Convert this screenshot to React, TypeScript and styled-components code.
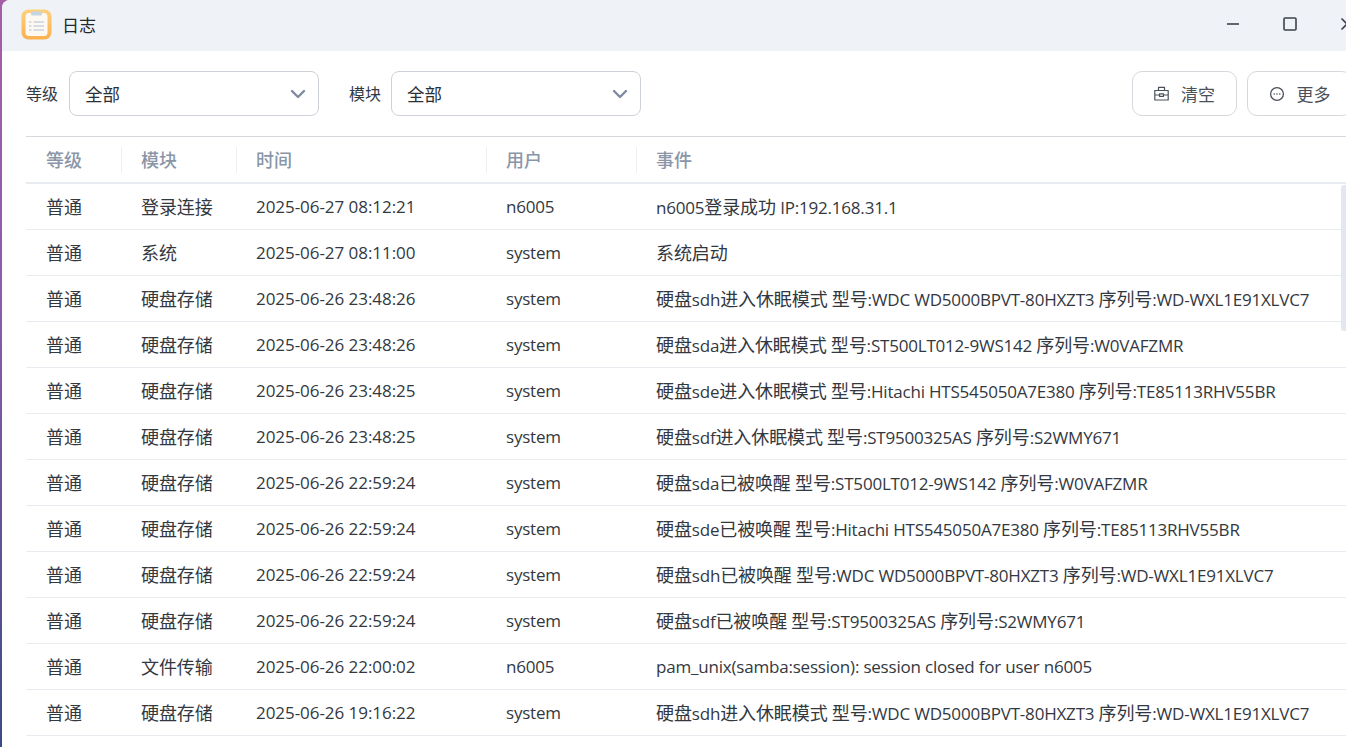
import React from "react";
import styled, { createGlobalStyle } from "styled-components";

const Global = createGlobalStyle`
  html, body { margin: 0; padding: 0; height: 100%; background: #fff; overflow: hidden; }
  #root { height: 100%; }
  * { box-sizing: border-box; }
`;

const Desktop = styled.div`
  width: 1346px;
  height: 747px;
  overflow: hidden;
  display: flex;
  background: linear-gradient(180deg, #a45fa6 0%, #8d5ca8 40%, #3d4a86 100%);
  font-family: "Open Sans", "Noto Sans CJK SC", "Noto Sans", sans-serif;
`;

const Win = styled.div`
  margin-left: 2px;
  width: 1374px;
  flex: none;
  height: 747px;
  background: #fff;
  border-top-left-radius: 8px;
  display: flex;
  flex-direction: column;
  overflow: hidden;
`;

const TitleBar = styled.div`
  height: 51px;
  flex: none;
  background: #eff3f8;
  display: flex;
  align-items: center;
  padding: 0 0 3px 19px;
`;

const Title = styled.div`
  margin-left: 10px;
  font-size: 17px;
  color: #23272e;
  width: 1142px;
  flex: none;
`;

const WinBtn = styled.div`
  width: 57px;
  height: 48px;
  flex: none;
  display: flex;
  align-items: center;
  justify-content: center;
`;

const Toolbar = styled.div`
  height: 85px;
  flex: none;
  display: flex;
  align-items: flex-start;
  padding: 20px 0 0 24px;
`;

const FieldLabel = styled.span<{ $gap: number }>`
  font-size: 16px;
  line-height: 46px;
  color: #333a44;
  margin-right: ${(p) => p.$gap}px;
  width: 32px;
  flex: none;
  white-space: nowrap;
`;

const Select = styled.div`
  width: 250px;
  height: 45px;
  flex: none;
  border: 1px solid #cdd2d9;
  border-radius: 8px;
  display: flex;
  align-items: center;
  justify-content: space-between;
  padding: 0 12px 0 15px;
  font-size: 17.5px;
  color: #2b2f36;
  margin-right: 30px;
`;

const Spacer = styled.div`
  width: 461px;
  flex: none;
`;

const ActionBtn = styled.div`
  width: 105px;
  height: 45px;
  border: 1px solid #d5d9de;
  border-radius: 10px;
  display: flex;
  align-items: center;
  justify-content: center;
  gap: 12px;
  font-size: 17px;
  color: #4a505a;
  margin-right: 10px;
  flex: none;
`;

const TableWrap = styled.div`
  margin-left: 24px;
  width: 1320px;
  flex: 1;
  position: relative;
  border-top: 1px solid #d5d9de;
`;

const Row = styled.div<{ $head?: boolean }>`
  display: grid;
  grid-template-columns: 95px 115px 250px 150px 1fr;
  height: ${(p) => (p.$head ? "47px" : "46px")};
  align-items: center;
  border-bottom: ${(p) => (p.$head ? "2px solid #e8ebef" : "1px solid #e8ebef")};
  font-size: 17px;
  color: ${(p) => (p.$head ? "#8a96a8" : "#33383f")};
  font-weight: ${(p) => (p.$head ? 500 : 400)};
`;

const Cell = styled.div<{ $divider?: boolean }>`
  padding-left: ${(p) => (p.$divider ? "19px" : "20px")};
  white-space: nowrap;
  height: 26px;
  line-height: 26px;
  letter-spacing: -0.2px;
  border-left: ${(p) => (p.$divider ? "1px solid #eceef1" : "none")};
`;

const TimeCell = styled(Cell)`
  letter-spacing: -0.05px;
`;

const Han = styled.span`
  font-size: 18px;
  letter-spacing: -0.1px;
`;

const Thumb = styled.div`
  position: absolute;
  right: 0;
  top: 48px;
  width: 5px;
  height: 146px;
  background: #e3e8f0;
  border-radius: 3px 0 0 3px;
`;

const Mixed = ({ text }: { text: string }) => (
  <>
    {text.split(/([\u4e00-\u9fff]+)/).map((part, i) =>
      i % 2 === 1 ? <Han key={i}>{part}</Han> : part
    )}
  </>
);

const AppIcon = () => (
  <svg width="31" height="31" viewBox="0 0 31 31" style={{ flex: "none" }}>
    <defs>
      <linearGradient id="ic" x1="0" y1="0" x2="0" y2="1">
        <stop offset="0" stopColor="#fdd07f" />
        <stop offset="1" stopColor="#fbb04e" />
      </linearGradient>
    </defs>
    <rect x="0.5" y="0.5" width="30" height="30" rx="7" fill="url(#ic)" />
    <rect x="4.5" y="4" width="22" height="23" rx="3.5" fill="#fdf9f2" />
    <rect x="10" y="2.5" width="11" height="4" rx="1.5" fill="#c5d6e2" />
    <rect x="8" y="12" width="2.500" height="2" fill="#d5dce4" />
    <rect x="8" y="16" width="2.500" height="2" fill="#d5dce4" />
    <rect x="8" y="20" width="2.500" height="2" fill="#d5dce4" />
    <rect x="12.500" y="12" width="10.500" height="2" fill="#d5dce4" />
    <rect x="12.500" y="16" width="10.500" height="2" fill="#d5dce4" />
    <rect x="12.500" y="20" width="10.500" height="2" fill="#d5dce4" />
  </svg>
);

const Chevron = () => (
  <svg width="16" height="10" viewBox="0 0 16 10">
    <path d="M2 2l6 6 6-6" fill="none" stroke="#7f8aa0" strokeWidth="2.400" strokeLinecap="round" strokeLinejoin="round" />
  </svg>
);

const ClearIcon = () => (
  <svg width="15" height="15" viewBox="0 0 15 15" fill="none" stroke="#4a505a" strokeWidth="1.200">
    <path d="M.8 4.500h13.400v9.500H.8zM4.500 4.500V1.300h6v3.200M.8 9h4.700M9.500 9h4.700M5.500 7.800h4v2.500h-4z" strokeLinejoin="round" />
  </svg>
);

const MoreIcon = () => (
  <svg width="16" height="16" viewBox="0 0 16 16" fill="none">
    <circle cx="8" cy="8" r="6.400" stroke="#4a505a" strokeWidth="1.300" />
    <circle cx="5.200" cy="8" r="0.800" fill="#4a505a" />
    <circle cx="8" cy="8" r="0.800" fill="#4a505a" />
    <circle cx="10.800" cy="8" r="0.800" fill="#4a505a" />
  </svg>
);

const rows: string[][] = [
  ["登录连接", "2025-06-27 08:12:21", "n6005", "n6005登录成功 IP:192.168.31.1"],
  ["系统", "2025-06-27 08:11:00", "system", "系统启动"],
  ["硬盘存储", "2025-06-26 23:48:26", "system", "硬盘sdh进入休眠模式 型号:WDC WD5000BPVT-80HXZT3 序列号:WD-WXL1E91XLVC7"],
  ["硬盘存储", "2025-06-26 23:48:26", "system", "硬盘sda进入休眠模式 型号:ST500LT012-9WS142 序列号:W0VAFZMR"],
  ["硬盘存储", "2025-06-26 23:48:25", "system", "硬盘sde进入休眠模式 型号:Hitachi HTS545050A7E380 序列号:TE85113RHV55BR"],
  ["硬盘存储", "2025-06-26 23:48:25", "system", "硬盘sdf进入休眠模式 型号:ST9500325AS 序列号:S2WMY671"],
  ["硬盘存储", "2025-06-26 22:59:24", "system", "硬盘sda已被唤醒 型号:ST500LT012-9WS142 序列号:W0VAFZMR"],
  ["硬盘存储", "2025-06-26 22:59:24", "system", "硬盘sde已被唤醒 型号:Hitachi HTS545050A7E380 序列号:TE85113RHV55BR"],
  ["硬盘存储", "2025-06-26 22:59:24", "system", "硬盘sdh已被唤醒 型号:WDC WD5000BPVT-80HXZT3 序列号:WD-WXL1E91XLVC7"],
  ["硬盘存储", "2025-06-26 22:59:24", "system", "硬盘sdf已被唤醒 型号:ST9500325AS 序列号:S2WMY671"],
  ["文件传输", "2025-06-26 22:00:02", "n6005", "pam_unix(samba:session): session closed for user n6005"],
  ["硬盘存储", "2025-06-26 19:16:22", "system", "硬盘sdh进入休眠模式 型号:WDC WD5000BPVT-80HXZT3 序列号:WD-WXL1E91XLVC7"],
];

export default function App() {
  return (
    <Desktop>
      <Global />
      <Win>
        <TitleBar>
          <AppIcon />
          <Title>日志</Title>
          <WinBtn>
            <svg width="14" height="14" viewBox="0 0 14 14"><path d="M1 7h12" stroke="#3d424b" strokeWidth="1.600" /></svg>
          </WinBtn>
          <WinBtn>
            <svg width="14" height="14" viewBox="0 0 14 14"><rect x="1" y="1" width="12" height="12" rx="1" fill="none" stroke="#3d424b" strokeWidth="1.600" /></svg>
          </WinBtn>
          <WinBtn>
            <svg width="14" height="14" viewBox="0 0 14 14"><path d="M1.500 1.500l11 11M12.500 1.500l-11 11" stroke="#3d424b" strokeWidth="1.600" /></svg>
          </WinBtn>
        </TitleBar>
        <Toolbar>
          <FieldLabel $gap={11}>等级</FieldLabel>
          <Select>全部<Chevron /></Select>
          <FieldLabel $gap={10}>模块</FieldLabel>
          <Select>全部<Chevron /></Select>
          <Spacer />
          <ActionBtn><ClearIcon />清空</ActionBtn>
          <ActionBtn><MoreIcon />更多</ActionBtn>
        </Toolbar>
        <TableWrap>
          <Row $head>
            <Cell><Han>等级</Han></Cell>
            <Cell $divider><Han>模块</Han></Cell>
            <Cell $divider><Han>时间</Han></Cell>
            <Cell $divider><Han>用户</Han></Cell>
            <Cell $divider><Han>事件</Han></Cell>
          </Row>
          {rows.map((r, i) => (
            <Row key={i}>
              <Cell><Han>普通</Han></Cell>
              <Cell><Mixed text={r[0]} /></Cell>
              <TimeCell>{r[1]}</TimeCell>
              <Cell><Mixed text={r[2]} /></Cell>
              <Cell><Mixed text={r[3]} /></Cell>
            </Row>
          ))}
          <Thumb />
        </TableWrap>
      </Win>
    </Desktop>
  );
}
